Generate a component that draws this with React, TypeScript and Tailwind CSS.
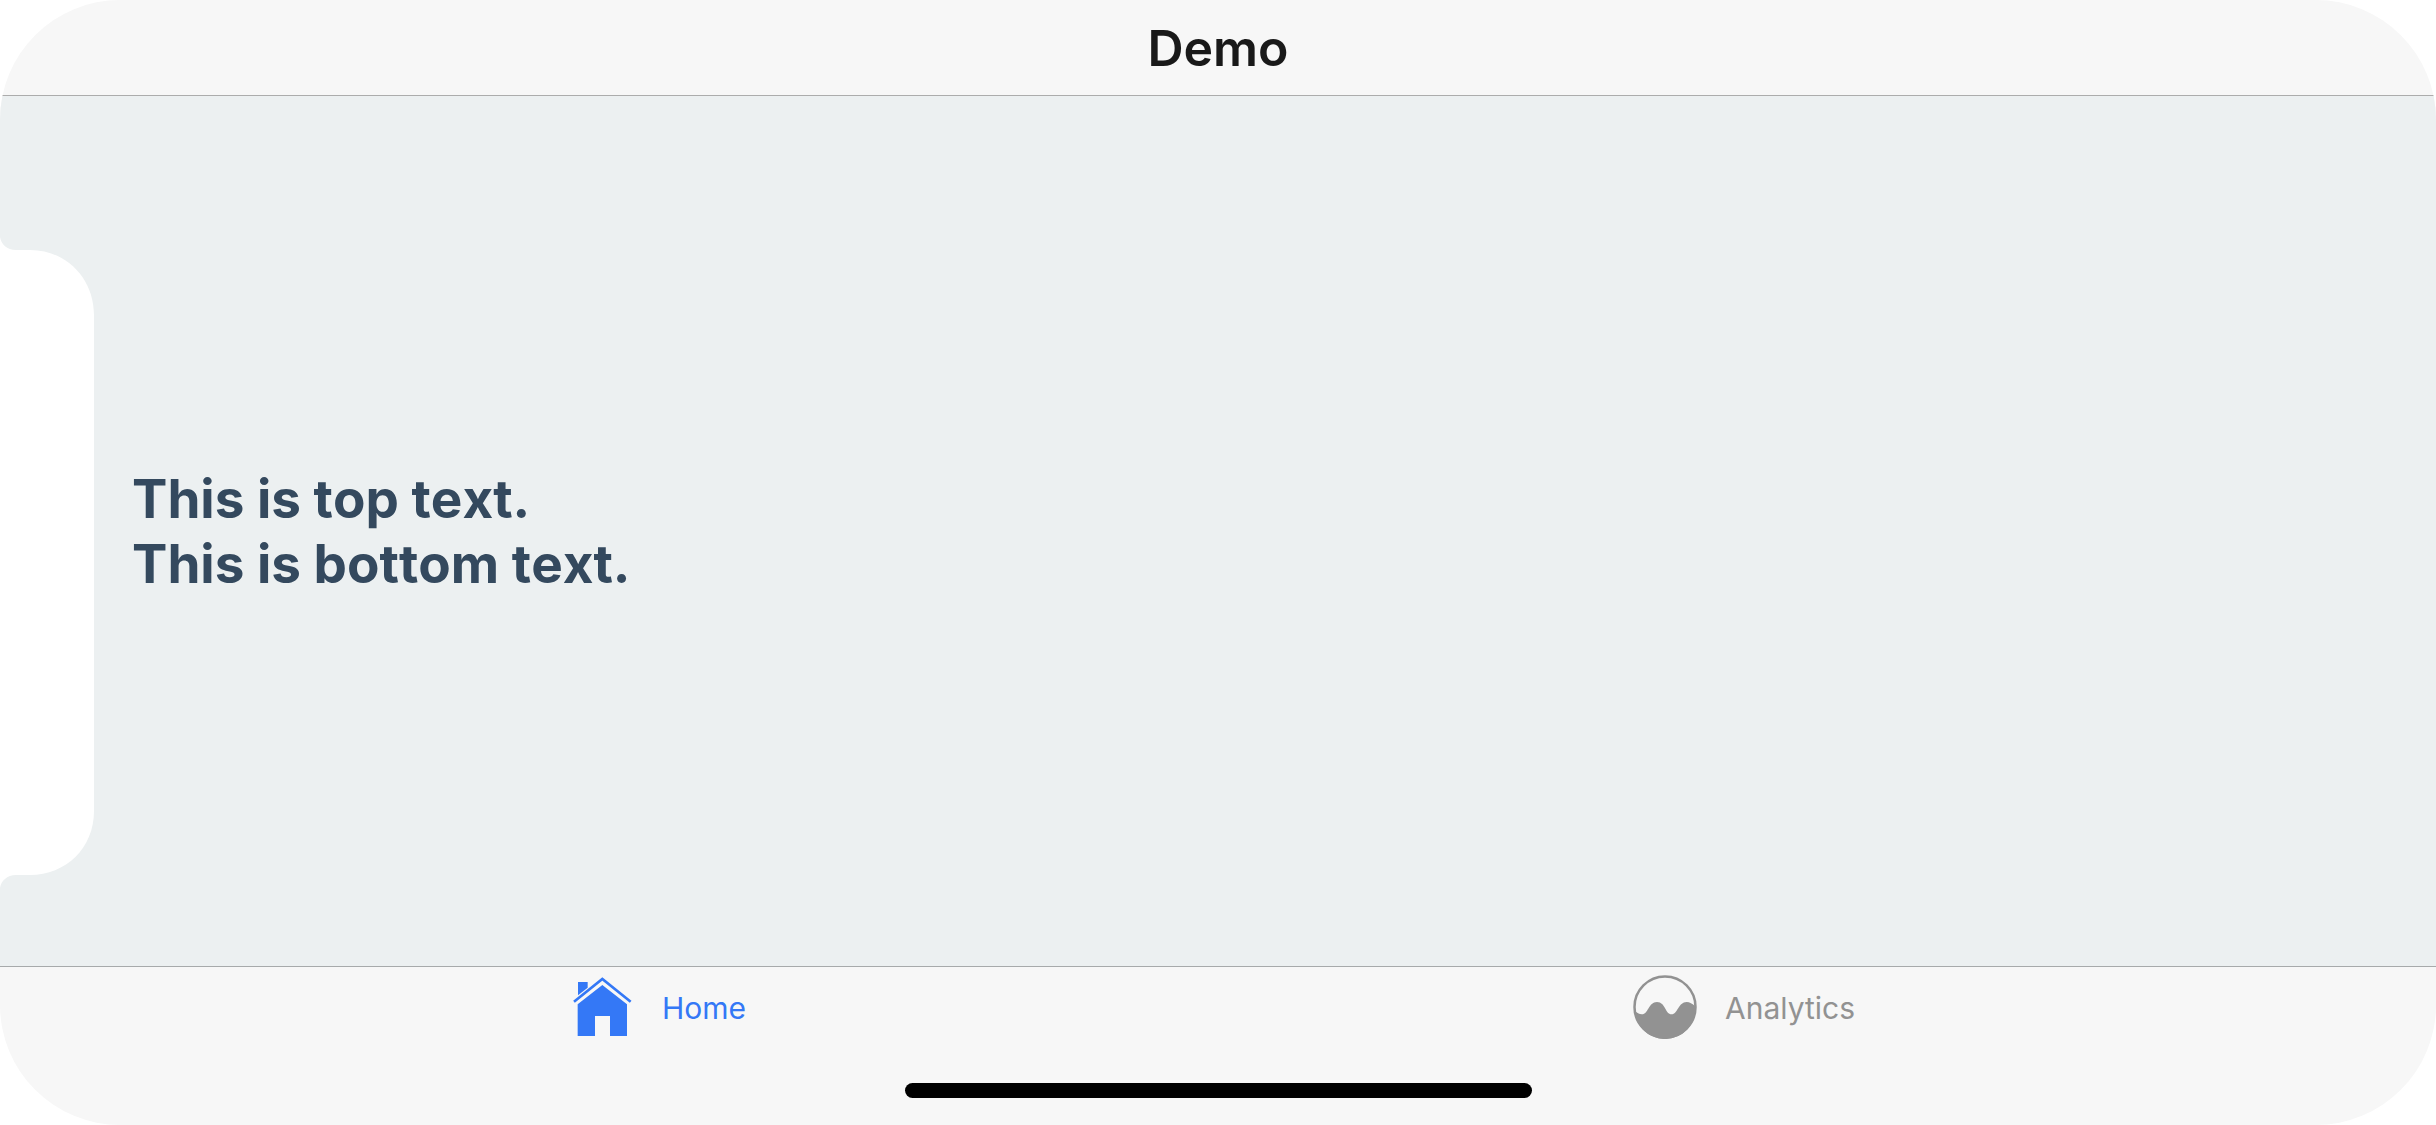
import React from 'react';

interface IconProps {
  className?: string;
}

interface TabItem {
  id: string;
  label: string;
  icon: React.FC<IconProps>;
}

const HomeIcon: React.FC<IconProps> = ({ className }) => (
  <svg viewBox="30 45 192 192" className={className} fill="currentColor" aria-hidden="true">
    <path d="M54 66H83V83L54 106Z" />
    <path d="M42 125L127 57L212 125" fill="none" stroke="currentColor" strokeWidth="8" />
    <path d="M127 75L201 133V228H150V168H105V228H53V133Z" />
  </svg>
);

const AnalyticsIcon: React.FC<IconProps> = ({ className }) => (
  <svg viewBox="38 44 192 192" className={className} fill="currentColor" aria-hidden="true">
    <circle cx="134" cy="140" r="91.5" fill="none" stroke="currentColor" strokeWidth="7.5" />
    <path d="M42 150C50 158 56 162 65 162C84 162 84 125 110 125C136 125 134 162 154 162C172 162 174 125 199 125C208 125 216 130 225 138V140A91 91 0 0 1 43 150Z" />
  </svg>
);

const tabs: TabItem[] = [
  { id: 'home', label: 'Home', icon: HomeIcon },
  { id: 'analytics', label: 'Analytics', icon: AnalyticsIcon },
];

// Device notch, on the left side in landscape
const Notch: React.FC = () => (
  <svg
    viewBox="0 0 94 652"
    className="absolute left-0 top-1/2 h-[652px] w-[94px] -translate-y-1/2 text-white"
    fill="currentColor"
    aria-hidden="true"
  >
    <path d="M0 0C1 7 7 13 16 13H30C66 13 94 41 94 78V574C94 611 66 638 30 638H16C7 638 1 644 0 651Z" />
  </svg>
);

const App: React.FC = () => {
  const [activeTab, setActiveTab] = React.useState('home');

  return (
    <div className="min-h-screen bg-white font-['Inter',sans-serif]">
      <div className="relative flex min-h-screen flex-col overflow-hidden rounded-[120px] bg-[#f7f7f7]">
        <header className="flex h-24 items-center justify-center border-b border-[#acacac]">
          <h1 className="text-[50px] leading-[60px] font-semibold text-[#191919]">Demo</h1>
        </header>

        <main className="flex flex-1 flex-col justify-center bg-[#ecf0f1] px-[132px] pt-0.5 text-[53px] leading-[65px] font-bold text-[#34495e] [font-kerning:none]">
          <p>This is top text.</p>
          <p>This is bottom text.</p>
        </main>

        <footer className="border-t border-[#a7aaab] pt-2 pb-[27px]">
          <nav className="grid grid-cols-2 pr-[149px] pl-[115px]">
            {tabs.map(({ id, label, icon: Icon }) => (
              <button
                key={id}
                type="button"
                onClick={() => setActiveTab(id)}
                className={`flex items-center justify-center gap-7 text-[30px] leading-10 ${
                  activeTab === id ? 'text-[#3478f6]' : 'text-[#929292]'
                }`}
              >
                <Icon className="size-16" />
                <span className="pt-0.5">{label}</span>
              </button>
            ))}
          </nav>
          <div className="mx-auto mt-11 h-[15px] w-[627px] rounded-full bg-black" />
        </footer>

        <Notch />
      </div>
    </div>
  );
};

export default App;
